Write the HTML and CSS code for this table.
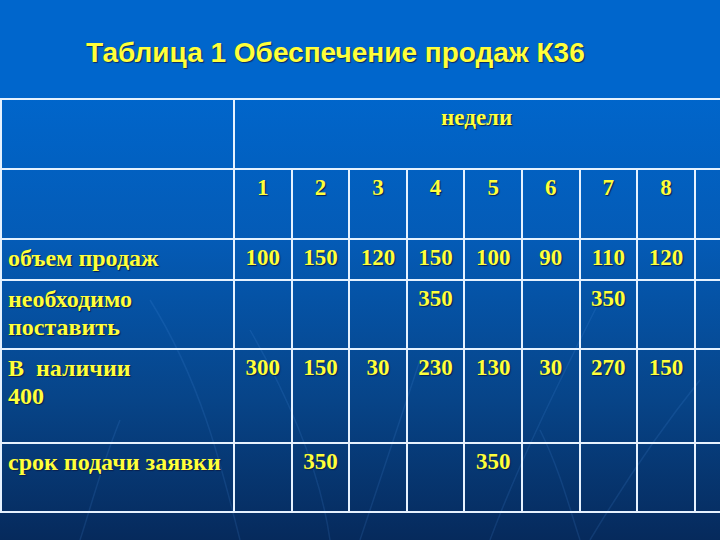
FILE: index.html
```html
<!DOCTYPE html>
<html lang="ru">
<head>
<meta charset="utf-8">
<title>Таблица 1 Обеспечение продаж К36</title>
<link rel="stylesheet" href="styles.css">
</head>
<body>
<div class="slide">
  <svg class="streaks" width="720" height="540" viewBox="0 0 720 540" aria-hidden="true">
    <path d="M150 300 C 200 380, 220 460, 240 540" />
    <path d="M250 330 C 290 400, 320 470, 330 540" />
    <path d="M420 360 C 400 420, 380 480, 360 540" />
    <path d="M600 300 C 560 380, 520 460, 490 540" />
    <path d="M700 380 C 660 430, 620 490, 590 540" />
    <path d="M120 420 C 100 470, 90 510, 80 540" />
    <path d="M540 430 C 560 470, 570 510, 580 540" />
  </svg>
  <h1 class="title">Таблица 1 Обеспечение продаж К36</h1>
  <div class="grid">
    <div class="cell r1"></div>
    <div class="cell r1 weeks">недели</div>

    <div class="cell r2"></div>
    <div class="cell r2 num">1</div>
    <div class="cell r2 num">2</div>
    <div class="cell r2 num">3</div>
    <div class="cell r2 num">4</div>
    <div class="cell r2 num">5</div>
    <div class="cell r2 num">6</div>
    <div class="cell r2 num">7</div>
    <div class="cell r2 num">8</div>
    <div class="cell r2 num"></div>

    <div class="cell r3 label">объем продаж</div>
    <div class="cell r3 num">100</div>
    <div class="cell r3 num">150</div>
    <div class="cell r3 num">120</div>
    <div class="cell r3 num">150</div>
    <div class="cell r3 num">100</div>
    <div class="cell r3 num">90</div>
    <div class="cell r3 num">110</div>
    <div class="cell r3 num">120</div>
    <div class="cell r3 num"></div>

    <div class="cell r4 label">необходимо<br>поставить</div>
    <div class="cell r4 num"></div>
    <div class="cell r4 num"></div>
    <div class="cell r4 num"></div>
    <div class="cell r4 num">350</div>
    <div class="cell r4 num"></div>
    <div class="cell r4 num"></div>
    <div class="cell r4 num">350</div>
    <div class="cell r4 num"></div>
    <div class="cell r4 num"></div>

    <div class="cell r5 label">В&nbsp; наличии<br>400</div>
    <div class="cell r5 num">300</div>
    <div class="cell r5 num">150</div>
    <div class="cell r5 num">30</div>
    <div class="cell r5 num">230</div>
    <div class="cell r5 num">130</div>
    <div class="cell r5 num">30</div>
    <div class="cell r5 num">270</div>
    <div class="cell r5 num">150</div>
    <div class="cell r5 num"></div>

    <div class="cell r6 label">срок подачи заявки</div>
    <div class="cell r6 num"></div>
    <div class="cell r6 num">350</div>
    <div class="cell r6 num"></div>
    <div class="cell r6 num"></div>
    <div class="cell r6 num">350</div>
    <div class="cell r6 num"></div>
    <div class="cell r6 num"></div>
    <div class="cell r6 num"></div>
    <div class="cell r6 num"></div>
  </div>
</div>
</body>
</html>
```
FILE: styles.css
```css
html, body {
  margin: 0;
  padding: 0;
  width: 720px;
  height: 540px;
  overflow: hidden;
}

.slide {
  position: relative;
  width: 720px;
  height: 540px;
  overflow: hidden;
  display: flex;
  flex-direction: column;
  background: linear-gradient(180deg, #0066cc 0px, #0066cc 90px, #045bb6 240px, #074488 400px, #062a5c 540px);
}

.streaks {
  position: absolute;
  left: 0;
  top: 0;
  z-index: 0;
}

.streaks path {
  fill: none;
  stroke: #4a90e0;
  stroke-width: 1.5;
  opacity: 0.16;
}

.title {
  position: relative;
  z-index: 1;
  margin: 36px 0 0 0;
  padding-left: 86px;
  height: 34px;
  font-family: "Liberation Sans", Arial, sans-serif;
  font-weight: bold;
  font-size: 28px;
  line-height: 34px;
  color: #ffff3a;
  text-shadow: 1px 1px 1px #0a2a66;
  white-space: nowrap;
}

.grid {
  position: relative;
  z-index: 1;
  margin-top: 28px;
  display: grid;
  grid-template-columns: 233px repeat(9, 57.6px);
  grid-template-rows: 70px 70px 41px 69px 94px 69px;
  width: max-content;
  border-top: 2px solid #e6f2ff;
  border-left: 2px solid #e6f2ff;
  font-family: "Liberation Serif", "Times New Roman", serif;
  font-weight: bold;
  font-size: 23px;
  line-height: 28px;
  color: #ffff3a;
  text-shadow: 1px 1px 1px #0a1f50;
}

.cell {
  box-sizing: border-box;
  border-right: 2px solid #e6f2ff;
  border-bottom: 2px solid #e6f2ff;
  padding-top: 4px;
  white-space: nowrap;
}

.weeks {
  grid-column: 2 / span 9;
  text-align: center;
  padding-right: 33px;
}

.num {
  text-align: center;
}

.label {
  padding-left: 6px;
  font-size: 24px;
}
```
